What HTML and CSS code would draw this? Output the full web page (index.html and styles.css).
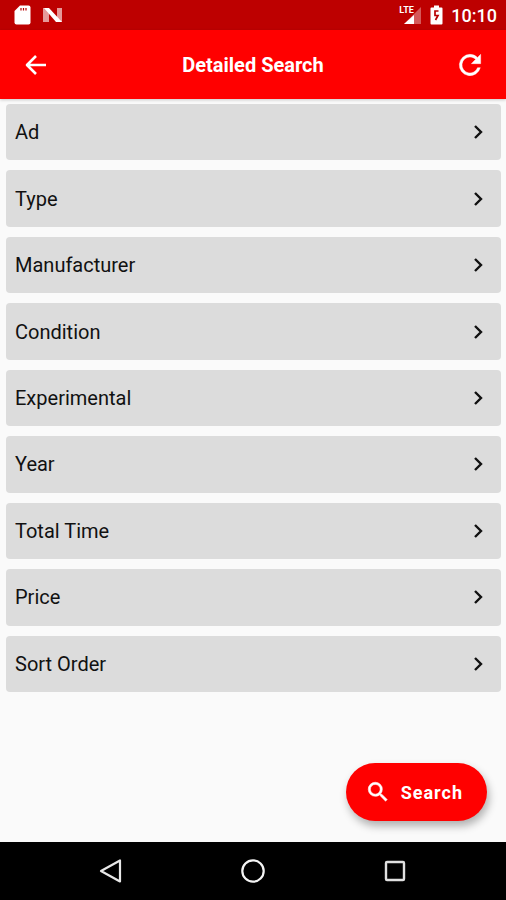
FILE: index.html
```html
<!DOCTYPE html>
<html lang="en">
<head>
<meta charset="utf-8">
<meta name="viewport" content="width=device-width, initial-scale=1">
<title>Detailed Search</title>
<link rel="stylesheet" href="styles.css">
</head>
<body>
<svg class="defs" aria-hidden="true">
  <symbol id="chevron" viewBox="0 0 12 16"><path d="M2 2l6 6-6 6" fill="none" stroke="#111" stroke-width="2.4"/></symbol>
</svg>
<div class="status">
  <div class="status-group">
    <svg width="17" height="20" viewBox="0 0 17 20" aria-hidden="true"><path d="M6 0.500h8.500q2 0 2 2v15q0 2-2 2h-12q-2 0-2-2V6z" fill="#fff"/><path d="M7 3v2.500M9.500 3v2.500M12 3v2.500" stroke="#b80000" stroke-width="1.200"/></svg>
    <svg width="20" height="16" viewBox="0 0 20 16" aria-hidden="true"><path d="M0 1h6v14H0zM14 1h5v14h-5z" fill="#fff" opacity=".6"/><path d="M1 1h5l13 14h-6z" fill="#fff"/></svg>
  </div>
  <div class="status-group status-right">
    <div class="signal">
      <svg width="23" height="20" viewBox="0 0 23 20" aria-hidden="true"><path d="M22 2v17H5z" fill="#fff" opacity=".35"/><path d="M15 10v9H5z" fill="#fff"/></svg>
      <span class="network">LTE</span>
    </div>
    <svg width="13" height="20" viewBox="0 0 13 20" aria-hidden="true"><path d="M4 0.500h5v2h2.500q1 0 1 1v15q0 1-1 1h-10q-1 0-1-1v-15q0-1 1-1H4z" fill="#fff"/><path d="M8.500 6H5v4.500h3L5.500 15" fill="none" stroke="#b80000" stroke-width="1.700"/></svg>
    <time>10:10</time>
  </div>
</div>
<header class="bar">
  <button class="icon-button" aria-label="Back"><svg width="28" height="28" viewBox="0 0 28 28"><path d="M24 14H5.500M14 5l-9 9 9 9" fill="none" stroke="#fff" stroke-width="2.600" stroke-linejoin="round"/></svg></button>
  <h1>Detailed Search</h1>
  <button class="icon-button" aria-label="Reset"><svg width="32" height="32" viewBox="0 0 24 24"><path d="M17.650 6.350A7.960 7.960 0 0 0 12 4a8 8 0 1 0 7.730 10h-2.080A6 6 0 1 1 12 6c1.660 0 3.140.69 4.220 1.780L13 11h7V4z" fill="#fff" stroke="#fff" stroke-width=".3"/></svg></button>
</header>
<main>
  <div class="filters">
    <button class="filter">Ad<svg class="chevron"><use href="#chevron"/></svg></button>
    <button class="filter">Type<svg class="chevron"><use href="#chevron"/></svg></button>
    <button class="filter">Manufacturer<svg class="chevron"><use href="#chevron"/></svg></button>
    <button class="filter">Condition<svg class="chevron"><use href="#chevron"/></svg></button>
    <button class="filter">Experimental<svg class="chevron"><use href="#chevron"/></svg></button>
    <button class="filter">Year<svg class="chevron"><use href="#chevron"/></svg></button>
    <button class="filter">Total Time<svg class="chevron"><use href="#chevron"/></svg></button>
    <button class="filter">Price<svg class="chevron"><use href="#chevron"/></svg></button>
    <button class="filter">Sort Order<svg class="chevron"><use href="#chevron"/></svg></button>
  </div>
  <div class="actions">
    <button class="search"><svg width="26" height="26" viewBox="0 0 24 24" aria-hidden="true"><path d="M15.500 14h-.79l-.28-.27A6.470 6.470 0 0 0 16 9.500 6.500 6.500 0 1 0 9.500 16c1.610 0 3.090-.59 4.230-1.570l.27.28v.79l5 4.990L20.490 19zm-6 0a4.500 4.500 0 1 1 0-9 4.500 4.500 0 0 1 0 9z" fill="#fff" stroke="#fff" stroke-width=".5"/></svg>Search</button>
  </div>
</main>
<nav>
  <button aria-label="Back"><svg width="26" height="26" viewBox="0 0 26 26"><path d="M22 2.500v21L3 13z" fill="none" stroke="#e8e8e8" stroke-width="2.200" stroke-linejoin="round"/></svg></button>
  <button aria-label="Home"><svg width="26" height="26" viewBox="0 0 26 26"><circle cx="13" cy="13" r="10.700" fill="none" stroke="#f4f4f4" stroke-width="2.200"/></svg></button>
  <button aria-label="Recent apps"><svg width="26" height="26" viewBox="0 0 26 26"><rect x="4" y="4" width="18" height="18" rx="1" fill="none" stroke="#e0e0e0" stroke-width="2.400"/></svg></button>
</nav>
</body>
</html>
```
FILE: styles.css
```css
* {
  box-sizing: border-box;
}

body {
  margin: 0;
  min-height: 100vh;
  display: flex;
  flex-direction: column;
  background: #fafafa;
  font-family: Roboto, "Liberation Sans", sans-serif;
}

button {
  border: 0;
  padding: 0;
  background: none;
  font: inherit;
  color: inherit;
  cursor: pointer;
}

svg {
  display: block;
}

.defs {
  display: none;
}

.status {
  height: 30px;
  padding: 0 9px 0 14px;
  display: flex;
  align-items: center;
  justify-content: space-between;
  background: #bd0000;
  color: #fff;
  font-size: 18px;
  font-weight: 500;
}

.status-group {
  display: flex;
  align-items: center;
  gap: 12px;
}

.status-right {
  gap: 8px;
}

.signal {
  position: relative;
}

.network {
  position: absolute;
  top: 0;
  left: 0;
  font-family: "Liberation Sans Narrow", Roboto, sans-serif;
  font-size: 9px;
  font-weight: 700;
  line-height: 10px;
}

.bar {
  height: 69px;
  padding: 0 16px;
  display: flex;
  align-items: center;
  justify-content: space-between;
  background: #f00;
  color: #fff;
  box-shadow: 0 1px 3px rgba(0, 0, 0, 0.2);
}

.bar h1 {
  margin: 0;
  font-size: 20px;
  font-weight: 700;
}

.icon-button {
  width: 40px;
  height: 40px;
  display: grid;
  place-items: center;
}

main {
  flex: 1;
  display: flex;
  flex-direction: column;
  padding: 5px 5px 0 6px;
}

.filters {
  flex: 1;
  display: grid;
  grid-auto-rows: 1fr;
  gap: 10px;
}

.filter {
  min-height: 48px;
  padding: 0 16px 0 9px;
  display: flex;
  align-items: center;
  justify-content: space-between;
  border-radius: 4px;
  background: #dcdcdc;
  color: #111;
  font-size: 20px;
  text-align: left;
}

.chevron {
  width: 12px;
  height: 16px;
}

.actions {
  display: flex;
  justify-content: flex-end;
  padding: 71px 14px 21px;
}

.search {
  height: 58px;
  padding: 0 24px 0 19px;
  display: flex;
  align-items: center;
  gap: 10px;
  border-radius: 29px;
  background: #f00;
  color: #fff;
  font-size: 18px;
  font-weight: 700;
  letter-spacing: 1px;
  box-shadow: 2px 5px 8px rgba(0, 0, 0, 0.3);
}

nav {
  height: 58px;
  padding: 0 40px;
  display: grid;
  grid-template-columns: repeat(3, 1fr);
  place-items: center;
  background: #000;
}
```
